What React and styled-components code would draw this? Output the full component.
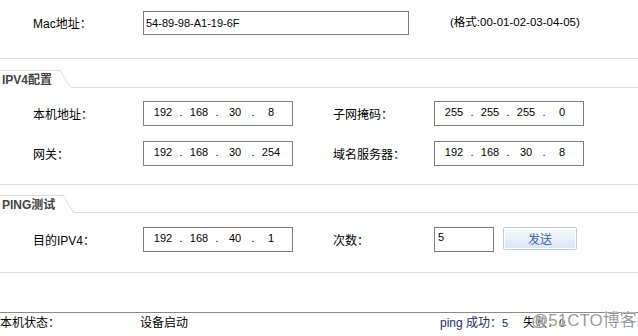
import React from "react";
import styled, { createGlobalStyle } from "styled-components";

const GlobalStyle = createGlobalStyle`
  html, body {
    margin: 0;
    padding: 0;
    background: #ffffff;
  }
  body {
    font-family: "Liberation Sans", "Noto Sans CJK SC", sans-serif;
    font-size: 12px;
    color: #000;
  }
`;

const Page = styled.div`
  position: relative;
  width: 638px;
  height: 336px;
  overflow: hidden;
  background: #fff;
`;

const MacRow = styled.div`
  display: flex;
  align-items: flex-start;
  box-sizing: border-box;
  height: 59px;
  padding: 11px 0 0 33px;
  border-bottom: 1px solid #e2e2e2;
`;

const Label = styled.div`
  width: ${(p) => p.$width || 110}px;
  flex-shrink: 0;
  height: 24px;
  line-height: 27px;
  font-size: 12px;
  white-space: nowrap;
`;

const MacInput = styled.div`
  box-sizing: border-box;
  width: 266px;
  height: 24px;
  border: 1px solid #7f7f7f;
  padding-left: 2px;
  line-height: 22px;
  font-size: 11px;
`;

const Hint = styled.div`
  margin-left: 41px;
  padding-top: 2px;
  font-size: 11.5px;
  white-space: nowrap;
`;

const Section = styled.section`
  margin-top: ${(p) => p.$top}px;
  padding-bottom: ${(p) => p.$bottom}px;
  border-bottom: 1px solid #e2e2e2;
`;

const SectionHead = styled.div`
  display: flex;
  height: 18px;
`;

const TabLabel = styled.div`
  box-sizing: border-box;
  height: 18px;
  padding: 0 8px 0 2px;
  border-top: 1px solid #dcdcdc;
  font-weight: bold;
  font-size: 12px;
  line-height: 18px;
  color: #444;
  white-space: nowrap;
`;

const Corner = styled.svg`
  display: block;
  width: 11px;
  height: 18px;
  flex-shrink: 0;
`;

const HeadFill = styled.div`
  flex: 1;
  border-bottom: 1px solid #dcdcdc;
`;

const Rows = styled.div`
  display: flex;
  flex-direction: column;
  gap: 15px;
  padding: ${(p) => p.$top}px 0 0 33px;
`;

const Row = styled.div`
  display: flex;
  align-items: center;
`;

const IpBox = styled.div`
  box-sizing: border-box;
  display: flex;
  align-items: center;
  width: 150px;
  height: 25px;
  border: 1px solid #7f7f7f;
  padding: 0 0 4px 6px;
  font-size: 11px;
  margin-right: ${(p) => p.$gap || 0}px;
`;

const Octet = styled.span`
  width: 26px;
  text-align: center;
`;

const Dot = styled.span`
  width: 10px;
  text-align: center;
`;

const CountInput = styled.div`
  box-sizing: border-box;
  width: 60px;
  height: 25px;
  border: 1px solid #7f7f7f;
  padding: 3px 0 0 3px;
  font-size: 11px;
`;

const SendButton = styled.button`
  box-sizing: border-box;
  width: 74px;
  height: 23px;
  margin: 0 0 2px 9px;
  padding: 0;
  border: 1px solid #bccde2;
  border-radius: 2px;
  background: linear-gradient(#f7fafd, #dae6f3);
  box-shadow: inset 0 0 0 1px #fdfeff;
  color: #3568a8;
  font-family: "Liberation Sans", "Noto Sans CJK SC", sans-serif;
  font-size: 12px;
`;

const StatusBar = styled.footer`
  display: flex;
  margin-top: 39px;
  border-top: 1px solid #8a8a8a;
  height: 22px;
  line-height: 20px;
  font-size: 12px;
`;

const StatusCell = styled.span`
  width: ${(p) => p.$width}px;
  flex-shrink: 0;
  color: ${(p) => p.$color || "#000"};
  white-space: nowrap;
`;

const Num = styled.span`
  font-size: 11px;
`;

const Watermark = styled.div`
  position: absolute;
  left: 531px;
  top: 306px;
  font-family: "Liberation Sans", "Noto Sans CJK SC", sans-serif;
  font-size: 17px;
  color: rgba(120, 120, 120, 0.75);
  text-shadow: 0 0 2px #fff, 0 0 1px #fff;
  white-space: nowrap;
`;

function Ip({ value, gap }) {
  const parts = value.split(".");
  return (
    <IpBox $gap={gap}>
      {parts.map((p, i) => (
        <React.Fragment key={i}>
          {i > 0 && <Dot>.</Dot>}
          <Octet>{p}</Octet>
        </React.Fragment>
      ))}
    </IpBox>
  );
}

function Head({ title }) {
  return (
    <SectionHead>
      <TabLabel>{title}</TabLabel>
      <Corner viewBox="0 0 11 18">
        <line x1="0" y1="0.5" x2="10.5" y2="17.5" stroke="#dcdcdc" strokeWidth="1" />
      </Corner>
      <HeadFill />
    </SectionHead>
  );
}

export default function App() {
  return (
    <Page>
      <GlobalStyle />
      <MacRow>
        <Label>Mac地址：</Label>
        <MacInput>54-89-98-A1-19-6F</MacInput>
        <Hint>(格式:00-01-02-03-04-05)</Hint>
      </MacRow>

      <Section $top={11} $bottom={18}>
        <Head title="IPV4配置" />
        <Rows $top={13}>
          <Row>
            <Label>本机地址：</Label>
            <Ip value="192.168.30.8" gap={40} />
            <Label $width={101}>子网掩码：</Label>
            <Ip value="255.255.255.0" />
          </Row>
          <Row>
            <Label>网关：</Label>
            <Ip value="192.168.30.254" gap={40} />
            <Label $width={101}>域名服务器：</Label>
            <Ip value="192.168.30.8" />
          </Row>
        </Rows>
      </Section>

      <Section $top={10} $bottom={20}>
        <Head title="PING测试" />
        <Rows $top={14}>
          <Row>
            <Label>目的IPV4：</Label>
            <Ip value="192.168.40.1" gap={40} />
            <Label $width={101}>次数：</Label>
            <CountInput>5</CountInput>
            <SendButton>发送</SendButton>
          </Row>
        </Rows>
      </Section>

      <StatusBar>
        <StatusCell $width={140}>本机状态：</StatusCell>
        <StatusCell $width={300}>设备启动</StatusCell>
        <StatusCell $width={83} $color="#1c2a66">
          ping 成功：<Num>5</Num>
        </StatusCell>
        <StatusCell $width={60}>
          失败：<Num>0</Num>
        </StatusCell>
      </StatusBar>
      <Watermark>@51CTO博客</Watermark>
    </Page>
  );
}
